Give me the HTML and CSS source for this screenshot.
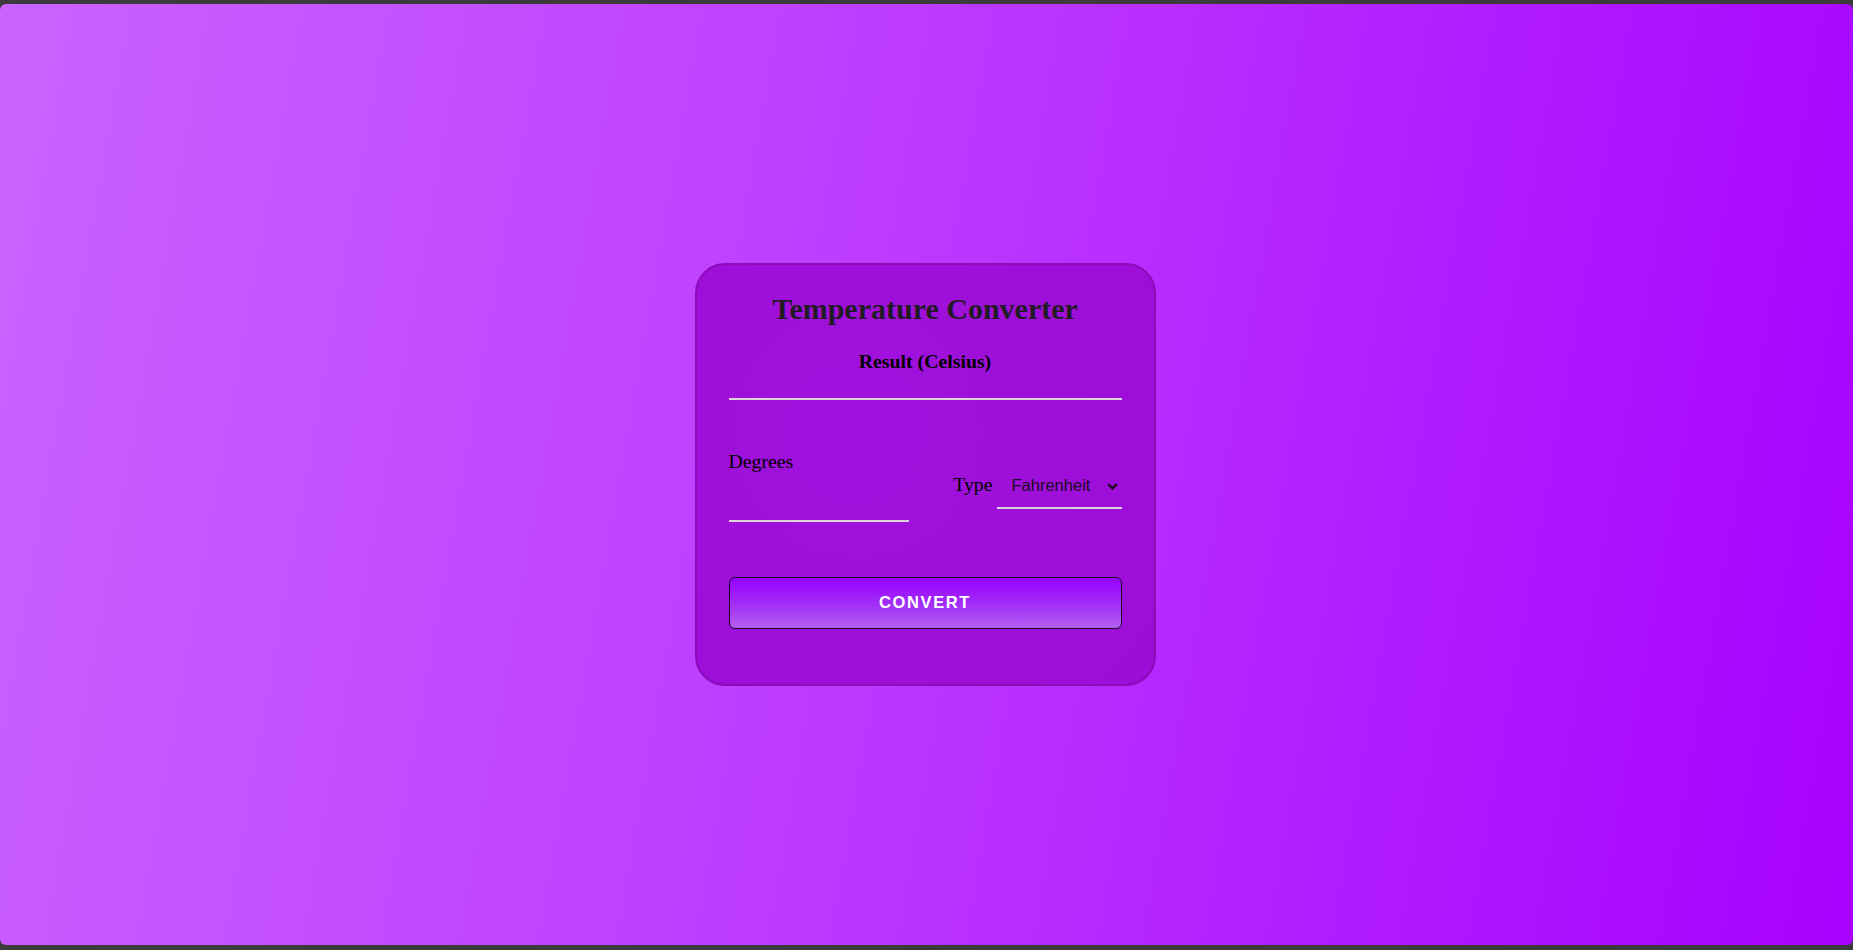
FILE: index.html
```html
<!DOCTYPE html>
<html lang="en">
<head>
<meta charset="utf-8">
<title>Temperature Converter</title>
<link rel="stylesheet" href="styles.css">
</head>
<body>
<main class="card">
  <h1 class="title">Temperature Converter</h1>
  <div class="result-label">Result (Celsius)</div>
  <div class="result-output"></div>
  <div class="inputs-row">
    <div class="degrees-group">
      <label class="field-label" for="deg">Degrees</label>
      <input class="degrees-input" id="deg" type="text">
    </div>
    <div class="type-group">
      <label class="field-label" for="type">Type</label>
      <span class="select-wrap">
        <select class="type-select" id="type">
          <option>Fahrenheit</option>
          <option>Celsius</option>
        </select>
        <svg class="chevron" width="11" height="7" viewBox="0 0 11 7"><path d="M1.2 1.2 L5.5 5.4 L9.8 1.2" fill="none" stroke="#1a0a22" stroke-width="2.4"/></svg>
      </span>
    </div>
  </div>
  <button class="convert-btn" type="button">CONVERT</button>
</main>
</body>
</html>
```
FILE: styles.css
```css
html {
  background: #3b3b3b;
  height: 100%;
}
body {
  box-sizing: border-box;
  margin: 4px 0 5px 0;
  padding-right: 3px;
  height: calc(100vh - 9px);
  border-radius: 6px;
  background: linear-gradient(100deg, #ca63ff 0%, #bd3cff 45%, #a700ff 100%);
  display: flex;
  align-items: center;
  justify-content: center;
  font-family: "Liberation Serif", "Times New Roman", serif;
  font-size: 19.8px;
  color: #000;
}
.card {
  box-sizing: border-box;
  width: 461px;
  padding: 27px 32px 55px;
  border: 2px solid #8c0cba;
  border-radius: 30px;
  background: radial-gradient(circle at 35% 40%, #a011dd 0%, #9c0ed6 100%);
}
.title {
  margin: 0 0 25px;
  font-size: 30px;
  font-weight: bold;
  text-align: center;
  color: #211c24;
  line-height: 33px;
}
.result-label {
  font-weight: bold;
  text-align: center;
  line-height: 22px;
}
.result-output {
  height: 26px;
  border-bottom: 2px solid #d9d4dc;
}
.inputs-row {
  margin-top: 49.5px;
  display: flex;
  justify-content: space-between;
  align-items: center;
}
.degrees-group {
  display: flex;
  flex-direction: column;
  width: 180px;
}
.field-label {
  line-height: 22px;
}
.degrees-input {
  box-sizing: border-box;
  height: 50.5px;
  width: 180px;
  border: none;
  border-bottom: 2px solid #d9d4dc;
  background: transparent;
  outline: none;
  padding: 0;
}
.type-group {
  display: flex;
  align-items: baseline;
  gap: 4px;
}
.select-wrap {
  position: relative;
  display: inline-block;
}
.type-select {
  appearance: none;
  -webkit-appearance: none;
  box-sizing: border-box;
  width: 125px;
  border: none;
  border-bottom: 2px solid #d9d4dc;
  border-radius: 0;
  background: transparent;
  font-family: "Liberation Sans", Arial, sans-serif;
  font-size: 16.5px;
  line-height: 19px;
  color: #1a0a22;
  padding: 13px 24px 12.5px 15px;
  outline: none;
}
.chevron {
  position: absolute;
  right: 4px;
  top: 50%;
  margin-top: -3px;
  pointer-events: none;
}
.convert-btn {
  display: block;
  box-sizing: border-box;
  width: 100%;
  height: 52px;
  margin-top: 55px;
  border: 1px solid #1a0626;
  border-radius: 6px;
  background: linear-gradient(180deg, #9800ff 0%, #a22cf8 50%, #b25ef2 100%);
  color: #fff;
  font-family: "Liberation Sans", Arial, sans-serif;
  font-size: 16.5px;
  font-weight: bold;
  letter-spacing: 1.6px;
  padding-top: 0;
  padding-bottom: 2px;
}
```
